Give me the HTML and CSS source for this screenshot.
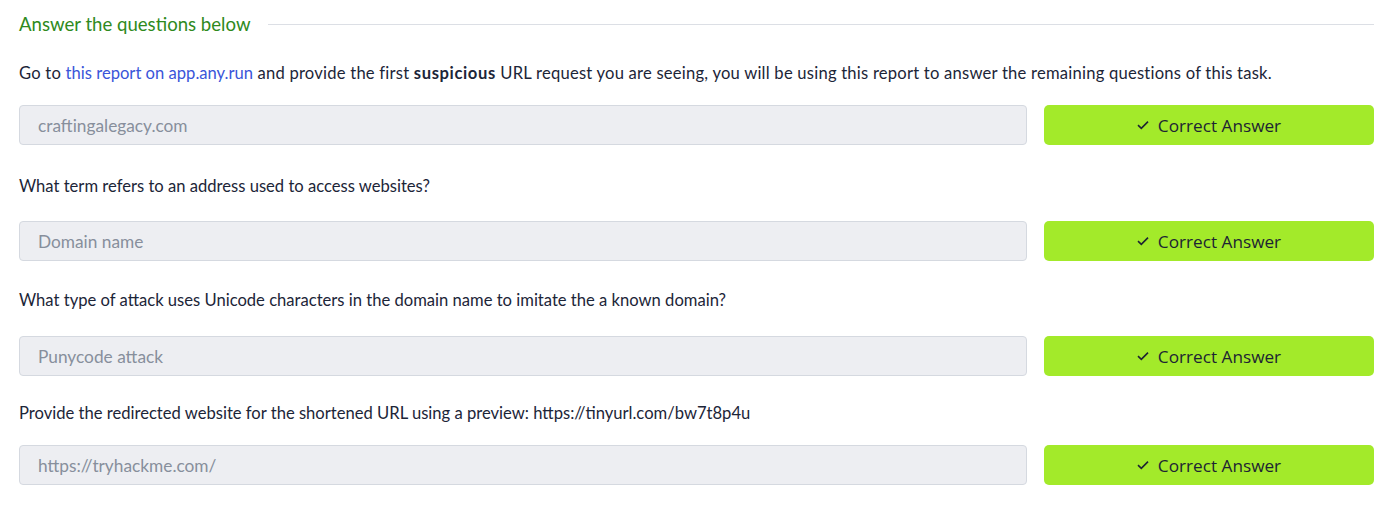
FILE: index.html
```html
<!DOCTYPE html>
<html lang="en">
<head>
<meta charset="utf-8">
<link rel="stylesheet" href="styles.css">
</head>
<body>
<div class="page">
  <div class="heading">
    <span class="heading-text">Answer the questions below</span>
    <span class="heading-line"></span>
  </div>

  <div class="q q1">
    <p class="q-text intro">Go to <a href="#">this report on app.any.run</a> and provide the first <b>suspicious</b> URL request you are seeing, you will be using this report to answer the remaining questions of this task.</p>
    <div class="row">
      <div class="field">craftingalegacy.com</div>
      <button class="btn"><svg class="check" viewBox="0 0 12 10" width="12" height="10"><path d="M1 5.2 L4.3 8.3 L11 1.6" fill="none" stroke="#1d2433" stroke-width="1.6"/></svg>Correct Answer</button>
    </div>
  </div>

  <div class="q q2">
    <p class="q-text">What term refers to an address used to access websites?</p>
    <div class="row">
      <div class="field">Domain name</div>
      <button class="btn"><svg class="check" viewBox="0 0 12 10" width="12" height="10"><path d="M1 5.2 L4.3 8.3 L11 1.6" fill="none" stroke="#1d2433" stroke-width="1.6"/></svg>Correct Answer</button>
    </div>
  </div>

  <div class="q q3">
    <p class="q-text">What type of attack uses Unicode characters in the domain name to imitate the a known domain?</p>
    <div class="row">
      <div class="field">Punycode attack</div>
      <button class="btn"><svg class="check" viewBox="0 0 12 10" width="12" height="10"><path d="M1 5.2 L4.3 8.3 L11 1.6" fill="none" stroke="#1d2433" stroke-width="1.6"/></svg>Correct Answer</button>
    </div>
  </div>

  <div class="q q4">
    <p class="q-text">Provide the redirected website for the shortened URL using a preview: https://tinyurl.com/bw7t8p4u</p>
    <div class="row">
      <div class="field">https://tryhackme.com/</div>
      <button class="btn"><svg class="check" viewBox="0 0 12 10" width="12" height="10"><path d="M1 5.2 L4.3 8.3 L11 1.6" fill="none" stroke="#1d2433" stroke-width="1.6"/></svg>Correct Answer</button>
    </div>
  </div>
</div>
</body>
</html>
```
FILE: styles.css
```css
html, body {
  margin: 0;
  padding: 0;
  background: #ffffff;
}
body {
  font-family: "Lato", "Open Sans", sans-serif;
  font-size: 16.6px;
  color: #1c2538;
}
.page {
  padding: 12px 17px 0 19px;
}
.heading {
  display: flex;
  align-items: center;
  height: 24px;
}
.heading-text {
  color: #2f8a1d;
  font-size: 18.6px;
  white-space: nowrap;
}
.heading-line {
  flex: 1;
  height: 1px;
  background: #dcdfe5;
  margin-left: 18px;
}
.q-text {
  margin: 0;
  line-height: 24px;
}
.q-text a {
  color: #3a55d9;
  text-decoration: none;
}
.q-text b {
  font-weight: 700;
}
.intro {
  letter-spacing: 0.22px;
}
.intro a {
  letter-spacing: 0;
}
.intro b {
  letter-spacing: 0.6px;
}
.row {
  display: flex;
  gap: 17px;
}
.q1 { padding-top: 25px; }
.q1 .row { margin-top: 20px; }
.q2 { padding-top: 29px; }
.q2 .row { margin-top: 23px; }
.q3 { padding-top: 27px; }
.q3 .row { margin-top: 24px; }
.q4 { padding-top: 25px; }
.q4 .row { margin-top: 20px; }
.field {
  flex: 1;
  box-sizing: border-box;
  height: 40px;
  background: #edeef2;
  border: 1px solid #d5d9e0;
  border-radius: 4px;
  padding: 0 18px;
  display: flex;
  align-items: center;
  color: #878f9c;
  font-size: 17.3px;
}
.btn {
  width: 330px;
  height: 40px;
  border: none;
  border-radius: 5px;
  background: #a3ea2a;
  color: #1d2433;
  font-family: "Open Sans", "Lato", sans-serif;
  font-size: 17.2px;
  display: flex;
  align-items: center;
  justify-content: center;
  gap: 9px;
  padding: 0;
  cursor: pointer;
}
.check {
  display: block;
}
```
